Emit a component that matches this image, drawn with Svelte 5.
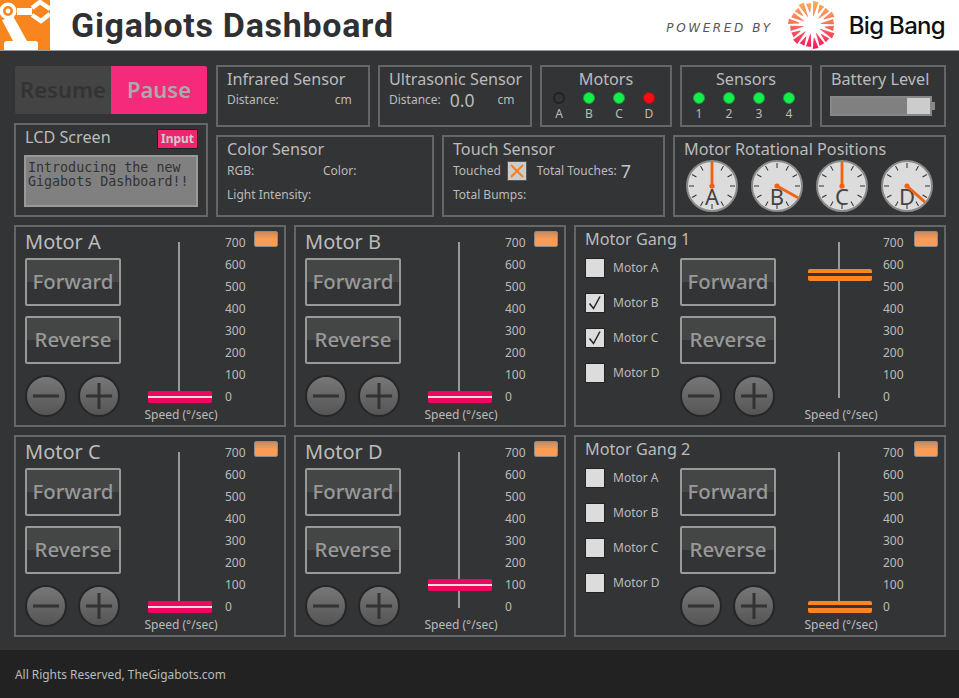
<script>
  const ticks = [0, 100, 200, 300, 400, 500, 600, 700];
  const scaleDesc = [...ticks].reverse();

  const motors = [
    { name: "Motor A", speed: 0 },
    { name: "Motor B", speed: 0 },
    { name: "Motor C", speed: 0 },
    { name: "Motor D", speed: 100 },
  ];

  const gangs = [
    { name: "Motor Gang 1", speed: 555, checks: [false, true, true, false] },
    { name: "Motor Gang 2", speed: 0, checks: [false, false, false, false] },
  ];

  const motorLeds = [
    { label: "A", state: "off" },
    { label: "B", state: "on" },
    { label: "C", state: "on" },
    { label: "D", state: "err" },
  ];
  const sensorLeds = ["1", "2", "3", "4"];

  const dials = [
    { label: "A", angle: 0 },
    { label: "B", angle: 119 },
    { label: "C", angle: 0 },
    { label: "D", angle: 132 },
  ];
  const dialTicks = Array.from({ length: 12 }, (_, i) => i * 30);

  // sunburst rays for the Big Bang mark
  const rays = Array.from({ length: 20 }, (_, i) => {
    const a = ((i * 18 + 9) * Math.PI) / 180;
    const inner = i % 2 ? 13 : 9;
    const outer = i % 3 === 0 ? 24 : 22;
    const pt = (r, t) => `${(24 + r * Math.sin(t)).toFixed(1)},${(24 - r * Math.cos(t)).toFixed(1)}`;
    return [pt(inner, a - 0.03), pt(outer, a - 0.12), pt(outer, a + 0.12), pt(inner, a + 0.03)].join(" ");
  });
</script>

{#snippet drive()}
  <button class="drive">Forward</button>
  <button class="drive">Reverse</button>
  <div class="steppers">
    <button class="step" aria-label="Slower">
      <svg width="26" height="26" viewBox="0 0 26 26"><path d="M0 13H26" /></svg>
    </button>
    <button class="step" aria-label="Faster">
      <svg width="26" height="26" viewBox="0 0 26 26"><path d="M0 13H26M13 0V26" /></svg>
    </button>
  </div>
{/snippet}

{#snippet slider(speed, variant)}
  <div class="slider">
    <div class="track">
      <div class="thumb thumb--{variant}" style="top: {149 - speed * 0.22}px"></div>
    </div>
    <div class="speed-label">Speed (°/sec)</div>
  </div>
  <div class="scale">
    {#each scaleDesc as t}
      <div>{t}</div>
    {/each}
  </div>
  <div class="tag"></div>
{/snippet}

<div class="page">
  <header class="header">
    <svg class="robot" width="50" height="50" viewBox="0 0 50 50">
      <rect width="50" height="50" fill="#f8851e" />
      <path d="M4 50V44Q4 41 7 41H35Q38 41 38 44V50Z" fill="#fff" />
      <path d="M2 20L13 16L27 41H13Z" fill="#fff" />
      <circle cx="8" cy="11" r="8.5" fill="#fff" />
      <circle cx="8" cy="11" r="5" fill="#f8851e" />
      <circle cx="8" cy="11" r="2.4" fill="#fff" />
      <path d="M17 8H32V15H17Z" fill="#fff" />
      <path d="M32 8L40 2L50 9M32 15L41 21L50 14" fill="none" stroke="#fff" stroke-width="4.5" />
    </svg>
    <h1 class="title">Gigabots Dashboard</h1>
    <div class="powered">POWERED BY</div>
    <svg class="burst" width="48" height="48" viewBox="0 0 48 48">
      <defs>
        <linearGradient id="burst-fill" gradientUnits="userSpaceOnUse" x1="24" y1="0" x2="24" y2="48">
          <stop offset="0" stop-color="#fab05a" />
          <stop offset="0.5" stop-color="#f8705a" />
          <stop offset="1" stop-color="#f2125f" />
        </linearGradient>
      </defs>
      {#each rays as r}
        <polygon points={r} fill="url(#burst-fill)" />
      {/each}
    </svg>
    <div class="bigbang">Big Bang</div>
  </header>

  <main class="content">
    <section class="top">
      <div class="left-col">
        <div class="run-toggle">
          <button class="run run--resume">Resume</button>
          <button class="run run--pause">Pause</button>
        </div>
        <div class="panel lcd">
          <div class="lcd-head">
            <h2>LCD Screen</h2>
            <span class="input-chip">Input</span>
          </div>
          <div class="lcd-text">Introducing the new<br />Gigabots Dashboard!!</div>
        </div>
      </div>

      <div class="right-col">
        <div class="row row--a">
          <div class="panel w-154">
            <h2>Infrared Sensor</h2>
            <div class="kv"><span>Distance:</span><span class="unit unit--ir">cm</span></div>
          </div>
          <div class="panel w-154">
            <h2>Ultrasonic Sensor</h2>
            <div class="kv">
              <span>Distance:</span><span class="big-val">0.0</span><span class="unit unit--us">cm</span>
            </div>
          </div>
          <div class="panel w-132 centered">
            <h2>Motors</h2>
            <div class="leds">
              {#each motorLeds as m}
                <div class="led-col"><i class="led led--{m.state}"></i><span>{m.label}</span></div>
              {/each}
            </div>
          </div>
          <div class="panel w-132 centered">
            <h2>Sensors</h2>
            <div class="leds">
              {#each sensorLeds as s}
                <div class="led-col"><i class="led led--on"></i><span>{s}</span></div>
              {/each}
            </div>
          </div>
          <div class="panel w-126">
            <h2>Battery Level</h2>
            <div class="battery">
              <div class="battery-body"><div class="battery-fill"></div></div>
              <div class="battery-nub"></div>
            </div>
          </div>
        </div>

        <div class="row row--b">
          <div class="panel w-218">
            <h2>Color Sensor</h2>
            <div class="kv kv--first"><span class="rgb">RGB:</span><span>Color:</span></div>
            <div class="kv kv--second">Light Intensity:</div>
          </div>
          <div class="panel w-223">
            <h2>Touch Sensor</h2>
            <div class="kv kv--first">
              <span>Touched</span>
              <svg class="touch-box" width="18" height="18" viewBox="0 0 18 18">
                <rect width="18" height="18" fill="#ccc" />
                <path d="M3 3L15 15M15 3L3 15" stroke="#f97f1c" stroke-width="2" />
              </svg>
              <span class="touch-total">Total Touches:</span>
              <span class="big-val big-val--touch">7</span>
            </div>
            <div class="kv kv--second">Total Bumps:</div>
          </div>
          <div class="panel w-273">
            <h2>Motor Rotational Positions</h2>
            <div class="dials">
              {#each dials as d}
                <svg width="52" height="52" viewBox="0 0 52 52">
                  <circle cx="26" cy="26" r="25" fill="#dcdcdc" stroke="#8a8a8a" stroke-width="2" />
                  {#each dialTicks as t}
                    <path d="M26 3V8" stroke="#333" stroke-width="1" transform="rotate({t} 26 26)" />
                  {/each}
                  <text x="26" y="45" text-anchor="middle" class="dial-letter">{d.label}</text>
                  <g transform="rotate({d.angle} 26 26)">
                    <path d="M26 26V3" stroke="#f4620f" stroke-width="2.8" stroke-linecap="round" />
                  </g>
                  <circle cx="26" cy="26" r="2.6" fill="#f4620f" />
                </svg>
              {/each}
            </div>
          </div>
        </div>
      </div>
    </section>

    <section class="drives">
      <div class="panel motor">
        {@render motorBody(motors[0])}
      </div>
      <div class="panel motor">
        {@render motorBody(motors[1])}
      </div>
      <div class="panel motor gang">
        {@render gangBody(gangs[0])}
      </div>
      <div class="panel motor">
        {@render motorBody(motors[2])}
      </div>
      <div class="panel motor">
        {@render motorBody(motors[3])}
      </div>
      <div class="panel motor gang">
        {@render gangBody(gangs[1])}
      </div>
    </section>
  </main>

  <footer class="footer">All Rights Reserved, TheGigabots.com</footer>
</div>

{#snippet motorBody(m)}
  <div class="col-left">
    <h2 class="motor-title">{m.name}</h2>
    {@render drive()}
  </div>
  {@render slider(m.speed, "pink")}
{/snippet}

{#snippet gangBody(g)}
  <div class="gang-checks">
    <h2 class="gang-title">{g.name}</h2>
    {#each g.checks as c, i}
      <div class="check-row">
        <span class="checkbox">
          {#if c}
            <svg width="18" height="18" viewBox="0 0 18 18">
              <path d="M3.5 9.5L7.5 14.5L14 2.5" fill="none" stroke="#222" stroke-width="1.5" />
            </svg>
          {/if}
        </span>
        <span class="check-label">Motor {"ABCD"[i]}</span>
      </div>
    {/each}
  </div>
  <div class="col-left col-left--gang">
    {@render drive()}
  </div>
  {@render slider(g.speed, "orange")}
{/snippet}

<style>
  :global(body) {
    margin: 0;
    background: #333436;
  }

  .page {
    display: flex;
    flex-direction: column;
    height: 698px;
    font-family: "Noto Sans", "Open Sans", sans-serif;
    color: #bbb;
    overflow: hidden;
  }

  h1,
  h2 {
    margin: 0;
    font-weight: 400;
  }

  button {
    font-family: inherit;
    padding: 0;
    cursor: pointer;
  }

  /* header */
  .header {
    display: flex;
    align-items: center;
    height: 50px;
    flex: none;
    background: #fff;
    border-bottom: 1px solid #999;
  }

  .robot {
    flex: none;
  }

  .title {
    margin-left: 21px;
    font-family: Roboto, sans-serif;
    font-size: 34px;
    font-weight: 700;
    letter-spacing: 0.7px;
    color: #2f3033;
    white-space: nowrap;
  }

  .powered {
    margin-left: auto;
    font-family: "DejaVu Sans", sans-serif;
    font-size: 12px;
    font-style: italic;
    letter-spacing: 2.6px;
    color: #555;
    white-space: nowrap;
    padding-top: 6px;
  }

  .burst {
    margin-left: 15px;
    flex: none;
  }

  .bigbang {
    margin: 0 14px 0 13px;
    font-family: Inter, sans-serif;
    font-size: 24px;
    font-weight: 500;
    letter-spacing: -0.7px;
    color: #111;
    white-space: nowrap;
  }

  /* main area */
  .content {
    flex: 1;
    background: #333436;
    padding: 14px 13px 0 14px;
  }

  .top {
    display: flex;
    gap: 8px;
  }

  .left-col {
    width: 194px;
    display: flex;
    flex-direction: column;
  }

  .right-col {
    width: 730px;
    display: flex;
    flex-direction: column;
    gap: 8px;
  }

  .row {
    display: flex;
    gap: 8px;
  }

  .row--a {
    height: 62px;
  }

  .row--b {
    height: 82px;
  }

  .panel {
    box-sizing: border-box;
    border: 2px solid #666;
    padding: 1px 9px;
    position: relative;
  }

  .panel h2 {
    font-size: 16.2px;
    line-height: 22px;
    color: #bbb;
    white-space: nowrap;
  }

  .w-154 { width: 154px; }
  .w-132 { width: 132px; }
  .w-126 { width: 126px; }
  .w-218 { width: 218px; }
  .w-223 { width: 223px; }
  .w-273 { width: 273px; }

  .centered {
    text-align: center;
  }

  .kv {
    display: flex;
    align-items: center;
    font-size: 12px;
    line-height: 18px;
    height: 18px;
    margin-top: 1px;
    white-space: nowrap;
  }

  .kv--first {
    margin-top: 2px;
  }

  .kv--second {
    margin-top: 6px;
  }

  .rgb {
    width: 96px;
  }

  .unit--ir {
    margin-left: 56px;
  }

  .big-val {
    font-size: 17.5px;
    margin-left: 9px;
  }

  .unit--us {
    margin-left: 23px;
  }

  /* resume / pause */
  .run-toggle {
    display: flex;
    margin: 1px 1px 9px;
  }

  .run {
    width: 96px;
    height: 48px;
    border: 0;
    padding-bottom: 3px;
    font-size: 22px;
    font-weight: 600;
  }

  .run--resume {
    background: #444;
    color: #333;
    border-radius: 2px 0 0 2px;
  }

  .run--pause {
    background: #f52a7a;
    color: #aaa;
    border-radius: 0 2px 2px 0;
  }

  /* lcd */
  .lcd {
    height: 94px;
    padding: 1px 8px;
  }

  .lcd-head {
    display: flex;
    justify-content: space-between;
    align-items: flex-start;
    height: 28px;
    padding-left: 1px;
  }

  .input-chip {
    box-sizing: border-box;
    width: 41px;
    height: 20px;
    margin-top: 3px;
    background: #f0246f;
    border: 1px solid #222;
    color: #ccc;
    font-size: 12px;
    font-weight: 700;
    line-height: 18px;
    text-align: center;
  }

  .lcd-text {
    box-sizing: border-box;
    height: 52px;
    margin-top: 1px;
    background: #808080;
    border: 2px solid #999;
    padding: 4px 2px 0;
    font-family: "DejaVu Sans Mono", monospace;
    font-size: 13.33px;
    line-height: 14px;
    color: #333;
    white-space: nowrap;
  }

  /* status leds */
  .leds {
    display: flex;
    justify-content: space-between;
    width: 102px;
    margin: 2px 0 0 2px;
  }

  .led-col {
    width: 12px;
    display: flex;
    flex-direction: column;
    align-items: center;
    font-size: 12px;
    line-height: 16px;
  }

  .led {
    box-sizing: border-box;
    width: 12px;
    height: 12px;
    border-radius: 50%;
    margin-bottom: 2px;
  }

  .led--on {
    background: #14f04a;
    border: 1px solid #1f9c3a;
  }

  .led--err {
    background: #ff0a14;
    border: 1px solid #a11;
  }

  .led--off {
    background: #333436;
    border: 2px solid #222;
  }

  /* battery */
  .battery {
    display: flex;
    align-items: center;
    margin: 6px 0 0 -1px;
  }

  .battery-body {
    box-sizing: border-box;
    width: 104px;
    height: 20px;
    border: 2px solid #888;
    background: #ccc;
  }

  .battery-fill {
    width: 76%;
    height: 100%;
    background: #808080;
  }

  .battery-nub {
    width: 3px;
    height: 8px;
    background: #888;
  }

  /* touch */
  .touch-box {
    margin-left: 7px;
    flex: none;
    outline: 1px solid #555;
  }

  .touch-total {
    margin-left: 11px;
  }

  .big-val--touch {
    margin-left: 4px;
    font-size: 18px;
    color: #c4c4c4;
  }

  /* dials */
  .dials {
    display: flex;
    gap: 13px;
    margin-top: 0;
    margin-left: 2px;
  }

  .dial-letter {
    font-size: 22px;
    fill: #444;
  }

  /* motor panels */
  .drives {
    display: grid;
    grid-template-columns: 272px 272px 372px;
    grid-auto-rows: 202px;
    gap: 8px;
    margin-top: 8px;
  }

  .motor {
    display: flex;
    padding: 0 9px;
  }

  .col-left {
    width: 96px;
    flex: none;
    display: flex;
    flex-direction: column;
  }

  .col-left--gang {
    padding-top: 31px;
  }

  .motor-title {
    height: 31px;
    font-size: 20px !important;
    line-height: 29px !important;
  }

  .drive {
    box-sizing: border-box;
    width: 96px;
    height: 48px;
    margin-bottom: 10px;
    padding-bottom: 2px;
    border: 2px solid #999;
    border-radius: 2px;
    background: linear-gradient(#444645 50%, #333436 50%);
    color: #999;
    font-size: 20.4px;
    font-weight: 500;
  }

  .steppers {
    display: flex;
    gap: 11px;
    margin-top: 1px;
  }

  .step {
    box-sizing: border-box;
    width: 42px;
    height: 42px;
    border-radius: 50%;
    border: 2px solid #252628;
    background: linear-gradient(#777, #555);
    display: flex;
    align-items: center;
    justify-content: center;
  }

  .step svg path {
    stroke: #333;
    stroke-width: 3;
    fill: none;
  }

  .slider {
    width: 64px;
    flex: none;
    margin-left: 27px;
    padding-top: 15px;
    position: relative;
  }

  .track {
    width: 2px;
    height: 156px;
    margin: 0 auto;
    background: #999;
    position: relative;
    left: -1px;
  }

  .thumb {
    box-sizing: border-box;
    position: absolute;
    left: -30px;
    width: 64px;
    height: 12px;
    border-radius: 2px;
  }

  .thumb--pink {
    background: linear-gradient(#f00560 40%, #ddd 40%, #ddd 60%, #f00560 60%);
  }

  .thumb--orange {
    background: linear-gradient(#f98424 36%, #333436 36%, #333436 62%, #f98424 62%);
  }

  .speed-label {
    width: 90px;
    margin: 8px 0 0 -12px;
    font-size: 12px;
    line-height: 17px;
    text-align: center;
    white-space: nowrap;
  }

  .scale {
    margin-left: 13px;
    padding-top: 5px;
    font-size: 12px;
    line-height: 22px;
  }

  .tag {
    position: absolute;
    top: 4px;
    right: 6px;
    box-sizing: border-box;
    width: 24px;
    height: 16px;
    border-radius: 2px;
    background: linear-gradient(#c98a62, #fa9c56 50%);
    border: 1px solid #8b8b8b;
  }

  /* gang panels */
  .gang-checks {
    width: 95px;
    flex: none;
  }

  .gang-title {
    height: 32px;
    font-size: 16.2px !important;
    line-height: 24px !important;
  }

  .check-row {
    display: flex;
    align-items: center;
    height: 18px;
    margin: 0 0 17px 1px;
    gap: 9px;
    font-size: 12px;
    white-space: nowrap;
  }

  .check-label {
    padding-bottom: 2px;
  }

  .checkbox {
    box-sizing: border-box;
    width: 18px;
    height: 18px;
    flex: none;
    background: #dcdcdc;
    outline: 1px solid #222;
    display: block;
  }

  .checkbox svg {
    display: block;
  }

  .gang .slider {
    margin-left: 32px;
  }

  .gang .scale {
    margin-left: 11px;
  }

  /* footer */
  .footer {
    flex: none;
    height: 48px;
    box-sizing: border-box;
    padding-left: 15px;
    background: #222;
    color: #bbb;
    font-size: 11.9px;
    line-height: 48px;
  }
</style>
